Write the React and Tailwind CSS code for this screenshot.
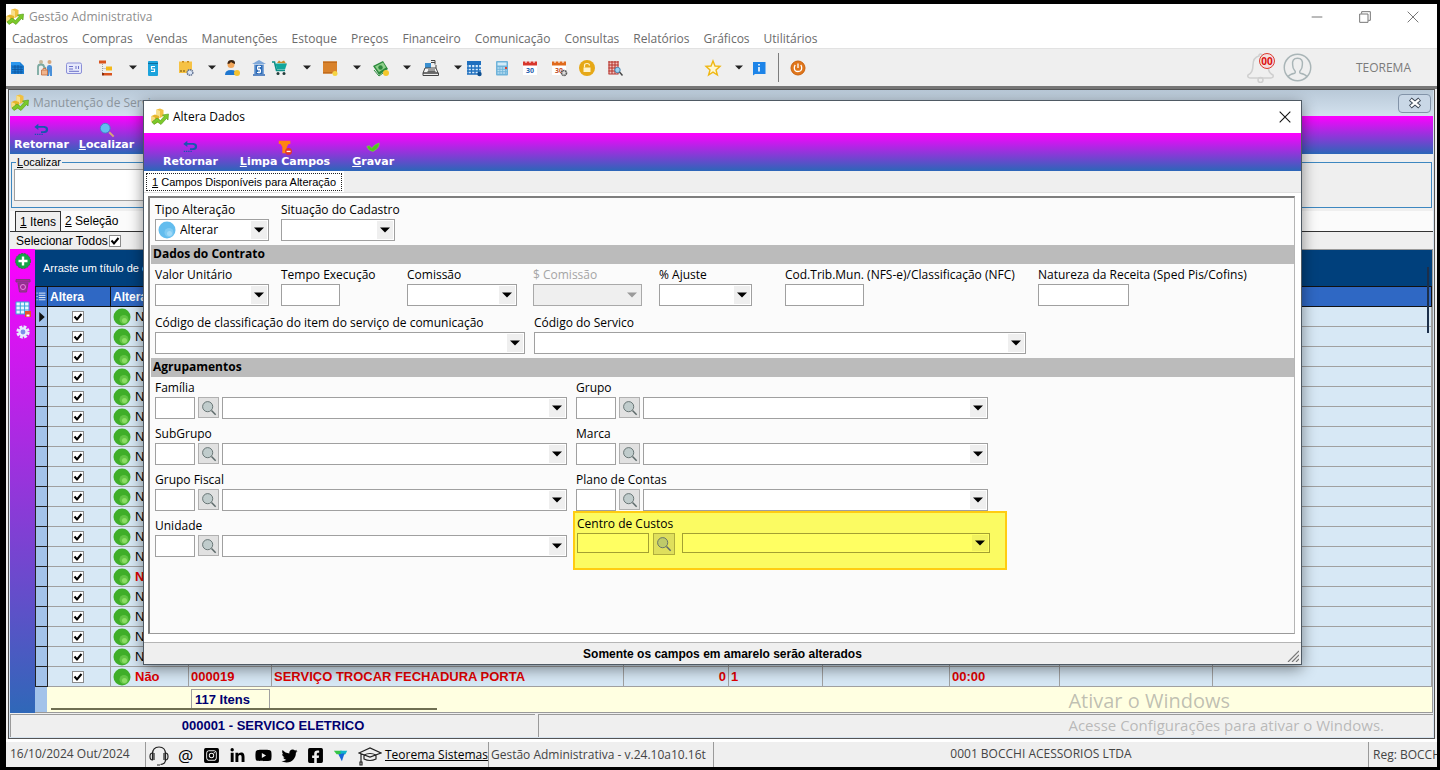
// src/App.jsx
import { useId } from "react";
import {
  FaFacebookSquare,
  FaInstagramSquare,
  FaLinkedinIn,
  FaTwitter,
  FaYoutube,
} from "react-icons/fa";

const menuItems = [
  "Cadastros",
  "Compras",
  "Vendas",
  "Manutenções",
  "Estoque",
  "Preços",
  "Financeiro",
  "Comunicação",
  "Consultas",
  "Relatórios",
  "Gráficos",
  "Utilitários",
];

/* ---------- Icons ---------- */

const Svg = ({ className = "h-[18px] w-[18px]", children }) => (
  <svg viewBox="0 0 18 18" className={`shrink-0 ${className}`} fill="none" aria-hidden="true">
    {children}
  </svg>
);

const Logo = () => (
  <Svg>
    <path d="M5.500 1.500L9 .5l3.500 1.500v6L9 10 5.500 8z" fill="#f0c040" />
    <path d="M5.500 1.500L9 3v6.500L5.500 8z" fill="#f9e08a" />
    <path d="M.5 8L4 6.500 8 8v6l-4 2-3.500-2z" fill="#e6b52a" />
    <path d="M.5 8L4 9.500v6L.5 14z" fill="#f6dc80" />
    <path d="M1 14l5-4 3.500 2.500L13 8.500 11.500 7 17.500 6l-.5 6-1.500-1.500L10 16.500 6.500 14 3 16.500z" fill="#7cc92a" stroke="#4f9a18" strokeWidth=".6" />
  </Svg>
);

const BookIcon = () => (
  <Svg>
    <path d="M3 3h9l4 4v8H3z" fill="#1b7fd6" />
    <path d="M3 3h9v3H3z" fill="#2b97ee" />
    <path d="M4 8h11M4 10.500h11M4 13h11M7 6v9M10 6v9M13 7v8" stroke="#0b5196" strokeWidth=".7" />
  </Svg>
);

const PeopleIcon = () => (
  <Svg>
    <circle cx="5" cy="3" r="2" fill="#c9b89a" />
    <circle cx="13.500" cy="3" r="2" fill="#d8a679" />
    <path d="M2 16V8q0-2.500 3-2.500T8 8l2 1.500" stroke="#7aa9a0" strokeWidth="1.800" />
    <path d="M11 8q0-2 2.500-2T16 8v9h-2v-5l-1 5h-2z" fill="#4a90d9" />
    <path d="M5.500 11h6v5h-6z" fill="#f0b48c" stroke="#c36a3a" strokeWidth=".8" />
    <path d="M7 11V9.500h3V11" stroke="#c36a3a" strokeWidth=".8" />
  </Svg>
);

const CardIcon = () => (
  <Svg>
    <rect x="1.500" y="4" width="15" height="10.500" rx="1.500" fill="#e6e9fb" stroke="#8b8fd8" />
    <path d="M4 7.500h4M4 10h4M4 12.300h10M11 7v3M13.500 7v3" stroke="#6c70c9" />
  </Svg>
);

const TreeIcon = () => (
  <Svg>
    <path d="M5.500 5v10H8M5.500 9.500h4" stroke="#8b8b8b" strokeWidth=".8" strokeDasharray="1 1" />
    <path d="M2 1.500h7v3H2z" fill="#d9531e" />
    <path d="M9 7.500h6v4H9z" fill="#f3b91a" />
    <path d="M7 14h8v2.500H7z" fill="#d9531e" />
    <path d="M5 14h2v2.500H5z" fill="#8c2d0a" />
  </Svg>
);

const PhoneMoneyIcon = () => (
  <Svg>
    <rect x="4" y="2" width="10" height="15" rx="1" fill="#1ca3dc" />
    <path d="M4 4.500h10" stroke="#0d6f9f" />
    <path d="M11 7.500H7.500v2.500h3v2.500H7" stroke="#fff" strokeWidth="1.200" />
  </Svg>
);

const BoxGearIcon = () => (
  <Svg>
    <path d="M2 2.500h13V14H2z" fill="#f6c244" />
    <path d="M5 2h2v1.500H5zM10 2h2v1.500h-2z" fill="#c98a1a" />
    <path d="M3 12h2M6 12h2" stroke="#6b4a07" />
    <circle cx="13" cy="13.500" r="2.800" fill="#dbe6f7" stroke="#5f7090" strokeWidth="1.500" strokeDasharray="1.500 .6" />
  </Svg>
);

const PersonIcon = () => (
  <Svg>
    <path d="M2 16q0-5 6-5t6 5z" fill="#1f77d0" />
    <circle cx="8" cy="5.500" r="3.500" fill="#f2a65a" />
    <path d="M4.500 5q0-4 4-4t3.500 4q-3-1-4-2-1 2-3.500 2z" fill="#3b2413" />
    <circle cx="14" cy="14" r="3" fill="#f6c22f" />
  </Svg>
);

const BankIcon = () => (
  <Svg>
    <path d="M9 1l7 4H2zM4 5.500h10V15H4z" fill="#7fa8d9" />
    <path d="M3 15h12v2H3z" fill="#5b87c2" />
    <rect x="5.500" y="6" width="7" height="9" fill="#2e6cb8" />
    <path d="M11 7.500H7.500v3h3v3H7M9 6.500v8" stroke="#fff" />
  </Svg>
);

const CartIcon = () => (
  <Svg>
    <path d="M6 4l2-2.500 2 1.500 3-1.500 2 3z" fill="#c98a2a" />
    <path d="M1 3h2.500l2 8.500H14" stroke="#0d8f86" strokeWidth="1.600" />
    <path d="M4.500 4.500H16l-2 6H6z" fill="#12a79c" />
    <circle cx="7" cy="14.500" r="1.500" fill="#223b3a" />
    <circle cx="13" cy="14.500" r="1.500" fill="#223b3a" />
  </Svg>
);

const PackageIcon = () => (
  <Svg>
    <path d="M2 2.500h14v12H2z" fill="#d9822b" />
    <path d="M2 2.500h14v1.500H2zM2 14.500h9v-1.500H2z" fill="#c26c1c" />
    <circle cx="14" cy="14.500" r="2.500" fill="#f5d443" />
  </Svg>
);

const MoneyIcon = () => (
  <Svg>
    <path d="M1 7l10-5 5 8-9 6z" fill="#2c8a3c" />
    <path d="M3 7.500l8-4 3 5-7 4.500z" fill="#8fd08c" />
    <circle cx="8.500" cy="8.500" r="2.200" fill="#2c8a3c" />
    <path d="M2 11l5 6 4-3" stroke="#2c8a3c" />
    <circle cx="14" cy="14" r="3" fill="#f4c72c" />
  </Svg>
);

const RegisterIcon = () => (
  <Svg>
    <path d="M3 4h6v5H3z" fill="#3a8fd0" />
    <path d="M9 1.500h4v4M14 6v3M9 3.500h4" stroke="#444" />
    <path d="M3 9h11l2 5H1z" fill="#f5f5f5" stroke="#444" />
    <path d="M1 14h15.500v2.500H1zM6 11h7M5.500 12.700h8" stroke="#444" />
  </Svg>
);

const TableIcon = () => (
  <Svg>
    <path d="M2 3h14v12H2z" fill="#d6eafb" />
    <path d="M2 2h14v4H2z" fill="#1f6fbe" />
    <path d="M2 9h14M2 12h14M2 15h12M3 6v9M6.500 6v9M10 6v9M13.500 6v9" stroke="#1f6fbe" strokeWidth="1.300" />
    <circle cx="14.500" cy="15" r="2.200" fill="#0e4f90" />
  </Svg>
);

const CalculatorIcon = () => (
  <Svg>
    <rect x="3" y="2" width="12" height="14.500" rx="1" fill="#6fb3da" />
    <path d="M4.500 3.500h9v3h-9z" fill="#d3ecf9" />
    <path d="M4.500 9h9M4.500 11.500h9M4.500 14h9" stroke="#b9def1" strokeWidth="1.500" strokeDasharray="2 .8" />
    <path d="M12 8h2v2h-2z" fill="#d9432f" />
  </Svg>
);

const CalendarIcon = ({ head, gear }) => (
  <Svg>
    <path d="M2 3h14v13H2z" fill="#fff" />
    <path d="M2 2.500h14v4H2z" fill={head} />
    <path d="M5 1.500v2.500M9 1.500v2.500M13 1.500v2.500" stroke="#fff" />
    <text x="9" y="13.500" textAnchor="middle" fontSize="7" fontWeight="700" fill={gear ? "#c4512a" : "#1f5fae"}>
      30
    </text>
    {gear && <circle cx="14" cy="14" r="2.500" fill="#ddd" stroke="#555" strokeWidth="1.600" strokeDasharray="1.500 .6" />}
  </Svg>
);

const LockIcon = () => (
  <Svg>
    <circle cx="9" cy="9" r="8" fill="#e6a817" />
    <path d="M5.500 8.500h7V13h-7z" fill="#fff3cc" />
    <path d="M6.500 8.500V6.500q0-2 2.500-2t2.500 2" stroke="#fff3cc" strokeWidth="1.200" />
  </Svg>
);

const GridSearchIcon = () => (
  <Svg>
    <path d="M2.500 2.500h10v12h-10z" fill="#f4c4bf" />
    <path d="M3 2v13M6 2v13M9 2v13M12 2v13M2.500 3h10M2.500 6h10M2.500 9h10M2.500 12h10M2.500 15h10" stroke="#b3312a" />
    <circle cx="11.500" cy="11" r="2.700" fill="#9bd2f2" stroke="#4b84ae" />
    <path d="M13.500 13l3 3.500" stroke="#444" strokeWidth="1.400" />
  </Svg>
);

const StarIcon = () => (
  <Svg>
    <path d="M9 2l2 5 5 .4-4 3.500 1.400 5.100L9 13.200 4.600 16 6 10.900 2 7.400 7 7z" fill="#fff7d0" stroke="#efb713" strokeWidth="1.400" />
  </Svg>
);

const InfoIcon = () => (
  <Svg>
    <path d="M3 3h12.500v12H5l-2 1.500z" fill="#1d84e8" />
    <path d="M9 8v4.500M9 5v1.500" stroke="#fff" strokeWidth="1.600" />
  </Svg>
);

const PowerIcon = () => (
  <Svg>
    <circle cx="9" cy="9" r="7" fill="#e0761b" stroke="#c9610d" />
    <path d="M6.300 6q-1 1-1 3 0 3.500 3.700 3.500t3.700-3.500q0-2-1-3M9 4.500V9" stroke="#fff" strokeWidth="1.300" />
  </Svg>
);

const BackIcon = () => (
  <Svg className="h-4 w-4">
    <path d="M6 2L1.500 5.500 6 9V6.500h6q2.500 0 2.500 2t-2.500 2H9v2h4q4-.5 4-4t-4-4H6z" fill="#1757b0" />
    <path d="M2 14h10" stroke="#1757b0" strokeWidth="1.500" strokeDasharray="1.500 1" />
  </Svg>
);

const FindIcon = () => (
  <Svg className="h-4 w-4">
    <circle cx="7" cy="7" r="5.500" fill="#63bdf0" stroke="#3b86c4" />
    <path d="M11.500 11.500l5 5" stroke="#d9a878" strokeWidth="2.200" />
  </Svg>
);

const CleanIcon = () => (
  <Svg className="h-4 w-4">
    <path d="M2 2h13v3.500h-2L11 9v7H6V9L4 5.500H2z" fill="#ff8412" />
    <circle cx="13" cy="14" r="3.800" fill="#e5352b" />
    <path d="M10.800 14h4.400" stroke="#fff" strokeWidth="1.500" />
  </Svg>
);

const SaveIcon = () => (
  <Svg className="h-4 w-4">
    <path d="M2 8.500l3-1 2.500 3q3-4.500 8.500-6 0 6-7 9.500Q4 13.500 2 8.500z" fill="#4ec41d" stroke="#7be04d" strokeWidth=".6" />
  </Svg>
);

const MagnifierIcon = () => (
  <Svg className="h-4 w-4">
    <circle cx="7.500" cy="7.500" r="5.700" fill="#5f8f8f" fillOpacity=".25" stroke="#5d6a6a" />
    <path d="M11.800 11.800l4.700 4.700" stroke="#5d6a6a" strokeWidth="1.700" />
  </Svg>
);

const DownArrow = ({ className = "text-black" }) => (
  <svg viewBox="0 0 10 6" className={`h-1.5 w-2.5 shrink-0 ${className}`} aria-hidden="true">
    <path d="M0 .5h10L5 5.500z" fill="currentColor" />
  </svg>
);

const MenuArrow = () => (
  <svg viewBox="0 0 10 6" className="h-1.5 w-2.5 shrink-0 text-[#222]" aria-hidden="true">
    <path d="M1 .5h8l-4 4z" fill="currentColor" />
  </svg>
);

const Ball = ({ color, light }) => (
  <Svg>
    <circle cx="9" cy="9" r="8.500" fill={color} />
    <circle cx="11" cy="11.500" r="4.500" fill={light} fillOpacity=".35" />
    <circle cx="11.500" cy="12.500" r="2.500" fill={light} fillOpacity=".6" />
  </Svg>
);

/* ---------- Form controls ---------- */

const Label = ({ id, muted, children }) => (
  <label
    htmlFor={id}
    className={`block h-5 whitespace-nowrap leading-[22px] ${muted ? "text-[#a5a5a5]" : "text-black"}`}
  >
    {children}
  </label>
);

const Combo = ({ id, label, width, height = "h-[22px]", disabled, value = "", icon, highlight }) => (
  <div
    className={`relative flex shrink-0 items-center border ${width} ${height} ${
      highlight
        ? "border-[#a3a032] bg-[#ffff62]"
        : disabled
          ? "border-[#a9a9a9] bg-[#efefef]"
          : "border-[#a0a0a0] bg-white"
    }`}
  >
    {icon && <span className="pl-0.5">{icon}</span>}
    <select
      id={id}
      aria-label={label}
      disabled={disabled}
      defaultValue={value}
      className="h-full min-w-0 flex-1 appearance-none bg-transparent pl-1 outline-none"
    >
      <option value={value}>{value}</option>
    </select>
    <span
      className={`pointer-events-none absolute inset-y-px right-px flex w-4 items-center justify-center ${
        highlight ? "bg-[#f1f15f]" : "bg-[#efefef]"
      }`}
    >
      <DownArrow className={disabled ? "text-[#9a9a9a]" : "text-black"} />
    </span>
  </div>
);

const ComboField = ({ label, cell, ...props }) => {
  const id = useId();
  return (
    <div className={cell}>
      <Label id={id} muted={props.disabled}>
        {label}
      </Label>
      <Combo id={id} {...props} />
    </div>
  );
};

const TextField = ({ label, cell, width }) => {
  const id = useId();
  return (
    <div className={cell}>
      <Label id={id}>{label}</Label>
      <input id={id} type="text" className={`block h-[22px] border border-[#a0a0a0] bg-white ${width}`} />
    </div>
  );
};

const LookupField = ({ label }) => {
  const id = useId();
  return (
    <div>
      <Label id={id}>{label}</Label>
      <div className="flex gap-[3px]">
        <input id={id} type="text" className="h-[22px] w-10 border border-[#a0a0a0] bg-white" />
        <button
          type="button"
          aria-label={`Pesquisar ${label}`}
          className="flex h-[21px] w-[21px] items-center justify-center border border-[#b0b0b0] bg-[#e1e1e1]"
        >
          <MagnifierIcon />
        </button>
        <Combo label={`${label} - descrição`} width="w-[345px]" />
      </div>
    </div>
  );
};

const CostCenterField = () => {
  const id = useId();
  return (
    <div className="h-[59px] w-[434px] border-2 border-[#ffcc11] bg-[#fbfb62] pl-0.5">
      <Label id={id}>Centro de Custos</Label>
      <div className="flex">
        <input id={id} type="text" className="h-5 w-[72px] border border-[#a3a032] bg-[#ffff62]" />
        <button
          type="button"
          aria-label="Pesquisar Centro de Custos"
          className="ml-1 mr-[7px] flex h-[22px] w-[22px] items-center justify-center border border-[#b0ad3c] bg-[#dfdf5c]"
        >
          <MagnifierIcon />
        </button>
        <Combo label="Centro de Custos - descrição" width="w-[308px]" height="h-5" highlight />
      </div>
    </div>
  );
};

const Section = ({ children }) => (
  <h2 className="ml-px mt-1 h-[19px] bg-[#bbbbbb] pl-0.5 font-bold leading-[18px] text-black">
    {children}
  </h2>
);

const ToolButton = ({ icon, hotkey, children }) => (
  <button
    type="button"
    className="flex flex-col items-center font-['DejaVu_Sans',sans-serif] text-[11px] font-bold leading-[14px] text-white"
  >
    {icon}
    <span>
      {hotkey && <u>{hotkey}</u>}
      {children}
    </span>
  </button>
);

const Check = ({ label, id }) => (
  <span className="relative flex h-3 w-3">
    <input
      id={id}
      type="checkbox"
      aria-label={label}
      defaultChecked
      className="peer h-3 w-3 appearance-none border border-[#8a8a8a] bg-white"
    />
    <svg viewBox="0 0 12 12" className="pointer-events-none absolute inset-0 hidden peer-checked:block" aria-hidden="true">
      <path d="M2.500 5.500l2.500 3 4.500-5.500" stroke="#000" strokeWidth="2" fill="none" />
    </svg>
  </span>
);

/* ---------- Main window ---------- */

const mainTools = [
  { name: "Empresas", icon: <BookIcon />, gap: "ml-0" },
  { name: "Clientes", icon: <PeopleIcon />, gap: "ml-2.5" },
  { name: "Cartões", icon: <CardIcon />, gap: "ml-[11px]" },
  { name: "Estrutura", icon: <TreeIcon />, gap: "ml-3.5" },
  { name: "Mais estrutura", icon: <MenuArrow />, gap: "ml-[13px]" },
  { name: "Contas", icon: <PhoneMoneyIcon />, gap: "ml-1.5" },
  { name: "Produtos", icon: <BoxGearIcon />, gap: "ml-[15px]" },
  { name: "Mais produtos", icon: <MenuArrow />, gap: "ml-3" },
  { name: "Vendedor", icon: <PersonIcon />, gap: "ml-1.5" },
  { name: "Banco", icon: <BankIcon />, gap: "ml-[9px]" },
  { name: "Pedidos", icon: <CartIcon />, gap: "ml-[3px]" },
  { name: "Mais pedidos", icon: <MenuArrow />, gap: "ml-[13px]" },
  { name: "Estoque", icon: <PackageIcon />, gap: "ml-[9px]" },
  { name: "Mais estoque", icon: <MenuArrow />, gap: "ml-[13px]" },
  { name: "Caixa", icon: <MoneyIcon />, gap: "ml-2.5" },
  { name: "Mais caixa", icon: <MenuArrow />, gap: "ml-3" },
  { name: "Frente de caixa", icon: <RegisterIcon />, gap: "ml-2.5" },
  { name: "Mais frente de caixa", icon: <MenuArrow />, gap: "ml-[13px]" },
  { name: "Tabela", icon: <TableIcon />, gap: "ml-0.5" },
  { name: "Calculadora", icon: <CalculatorIcon />, gap: "ml-2.5" },
  { name: "Agenda", icon: <CalendarIcon head="#d8362b" />, gap: "ml-2.5" },
  { name: "Configurar agenda", icon: <CalendarIcon head="#e06a1c" gear />, gap: "ml-[11px]" },
  { name: "Bloqueio", icon: <LockIcon />, gap: "ml-2.5" },
  { name: "Consulta", icon: <GridSearchIcon />, gap: "ml-2.5" },
  { name: "Favoritos", icon: <StarIcon />, gap: "ml-20" },
  { name: "Mais favoritos", icon: <MenuArrow />, gap: "ml-3" },
  { name: "Informações", icon: <InfoIcon />, gap: "ml-1.5" },
];

const AppHeader = () => (
  <header className="bg-white text-[#6b6b6b]">
    <div className="flex h-[25px] items-center pr-[18px] text-[#8e8e8e]">
      <Logo />
      <h1 className="ml-[5px]">Gestão Administrativa</h1>
      <div className="ml-auto flex items-center gap-9 text-[#777]">
        <button type="button" aria-label="Minimizar">
          <Svg className="h-3 w-3">
            <path d="M1 9h16" stroke="currentColor" strokeWidth="1.500" />
          </Svg>
        </button>
        <button type="button" aria-label="Restaurar">
          <Svg className="h-3 w-3">
            <path d="M1 4.500h12.500V17H1zM4 4V1h13v13h-3" stroke="currentColor" strokeWidth="1.500" />
          </Svg>
        </button>
        <button type="button" aria-label="Fechar">
          <Svg className="h-3 w-3">
            <path d="M1 1l16 16M17 1L1 17" stroke="currentColor" strokeWidth="1.500" />
          </Svg>
        </button>
      </div>
    </div>
    <nav className="flex h-[19px] items-center gap-3.5 pl-1.5">
      {menuItems.map((item) => (
        <button key={item} type="button">
          {item}
        </button>
      ))}
    </nav>
    <div className="flex h-[38px] items-center border-t border-[#e2e2e2] bg-[#efefef] pl-0.5 pr-[26px]">
      {mainTools.map(({ name, icon, gap }) => (
        <button key={name} type="button" aria-label={name} className={gap}>
          {icon}
        </button>
      ))}
      <span className="ml-2.5 h-[29px] w-px bg-[#7d7d7d]" />
      <button type="button" aria-label="Sair" className="ml-2.5">
        <PowerIcon />
      </button>
      <button type="button" aria-label="Notificações" className="relative ml-auto">
        <svg viewBox="0 0 28 30" className="h-[30px] w-7" fill="none" aria-hidden="true">
          <path d="M12 3q0-2 1.500-2T15 3q6 1.500 6 9 0 8 5 10 1 3-3 3H4q-4 0-3-3 5-2 5-10 0-7.500 6-9z" stroke="#cfcfcf" strokeWidth="1.500" />
          <circle cx="13.500" cy="27" r="2.500" stroke="#cfcfcf" strokeWidth="1.500" />
        </svg>
        <span className="absolute right-0 top-0 flex h-4 w-4 items-center justify-center rounded-full border border-[#dd3b30] bg-[#f3dede] text-[10px] font-bold text-[#dd1111]">
          00
        </span>
      </button>
      <button type="button" aria-label="Usuário" className="ml-2">
        <svg viewBox="0 0 30 30" className="h-[29px] w-[29px]" fill="none" stroke="#a9b5b7" strokeWidth="1.500" aria-hidden="true">
          <circle cx="15" cy="15" r="13.700" />
          <path d="M5 24.500q2-2.500 7-3.500 1.500-1 0-3-2-2-2-5.500Q9 5.500 15 5.500t5 7q0 3.500-2 5.500-1.500 2 0 3 5 1 7 3.500" />
        </svg>
      </button>
      <span className="ml-11 text-[#7b7b7b]">TEOREMA</span>
    </div>
  </header>
);

const rows = Array.from({ length: 19 }, (_, i) => ({ id: i + 1, alert: i === 13 || i === 18 }));

const ItemsTable = () => (
  <table className="w-full table-fixed border-collapse text-[13px]">
    <colgroup>
      <col className="w-3" />
      <col className="w-[63px]" />
      <col className="w-[78px]" />
      <col className="w-[83px]" />
      <col className="w-[352px]" />
      <col className="w-[105px]" />
      <col className="w-[94px]" />
      <col className="w-[127px]" />
      <col className="w-[110px]" />
      <col className="w-[153px]" />
      <col />
    </colgroup>
    <thead>
      <tr className="h-5 bg-[#2f68c4] text-left text-[12px] leading-[18px] text-white">
        <th className="border border-[#111] p-0">
          <Svg className="h-2.5 w-2.5">
            <path d="M5 2h12M5 6h12M5 10h12M5 14h12M1 2h2M1 8h2M1 14h2" stroke="#fff" strokeWidth="1.500" />
          </Svg>
        </th>
        <th className="border border-[#111] p-0 pl-0.5">Altera</th>
        <th className="overflow-hidden border border-[#111] p-0 pl-0.5">Alteração</th>
        <th colSpan={8} className="border border-[#111] p-0" />
      </tr>
    </thead>
    <tbody>
      {rows.map(({ id, alert }) => (
        <tr
          key={id}
          className={`h-5 bg-[#d7e8f5] leading-4 ${alert ? "font-bold text-[#e00000]" : "text-black"}`}
        >
          <td className="border border-[#222] bg-[#a3c3ea] p-0">
            {id === 1 && (
              <Svg className="mx-auto h-2.5 w-2.5">
                <path d="M4 0l10 9-10 9z" fill="#111" />
              </Svg>
            )}
          </td>
          <td className="border border-[#a0a0a0] p-0 pr-0.5">
            <div className="flex justify-center">
              <Check label={`Altera item ${id}`} />
            </div>
          </td>
          <td className="border border-[#a0a0a0] p-0 pl-0.5">
            <div className="flex items-center gap-1">
              <Ball color="#3fae29" light="#a6ee7a" />
              Não
            </div>
          </td>
          <td className="border border-[#a0a0a0] p-0 pl-0.5">{id === 19 && "000019"}</td>
          <td className="border border-[#a0a0a0] p-0 pl-0.5">
            {id === 19 && "SERVIÇO TROCAR FECHADURA PORTA"}
          </td>
          <td className="border border-[#a0a0a0] p-0 pr-0.5 text-right">{id === 19 && "0"}</td>
          <td className="border border-[#a0a0a0] p-0 pl-0.5">{id === 19 && "1"}</td>
          <td className="border border-[#a0a0a0] p-0" />
          <td className="border border-[#a0a0a0] p-0 pl-0.5">{id === 19 && "00:00"}</td>
          <td className="border border-[#a0a0a0] p-0" />
          <td className="border border-[#a0a0a0] p-0" />
        </tr>
      ))}
    </tbody>
  </table>
);

const SideTools = () => (
  <div className="flex w-[25px] shrink-0 flex-col items-center gap-1.5 bg-linear-to-b/srgb from-[#ff00ff] to-[#2f68b8] pt-[3px]">
    <button type="button" aria-label="Adicionar">
      <Svg>
        <circle cx="9" cy="9" r="7.500" fill="#17a349" stroke="#2c7a3f" strokeDasharray="2 1" />
        <path d="M9 4.500v9M4.500 9h9" stroke="#fff" strokeWidth="2.400" />
      </Svg>
    </button>
    <button type="button" aria-label="Excluir">
      <Svg>
        <path d="M2 3.500h14v2.500H2zM4 7h10l-1.500 9h-7z" fill="#a52a9b" stroke="#7d3d7c" />
        <circle cx="9" cy="11" r="2.500" stroke="#e38be0" />
      </Svg>
    </button>
    <button type="button" aria-label="Salvar grade">
      <Svg>
        <path d="M2 2h13v12H2z" fill="#e8f7ff" />
        <path d="M2 6h13M2 10h13M6.300 2v12M10.600 2v12M2 2h13v12H2z" stroke="#39a5dc" />
        <path d="M11 11h6v6h-6z" fill="#e5532b" />
        <path d="M12.500 14.500h3v2h-3z" fill="#fff" />
      </Svg>
    </button>
    <button type="button" aria-label="Configurações">
      <Svg className="h-4 w-4">
        <circle cx="9" cy="9" r="6" stroke="#e6ecff" strokeWidth="3" strokeDasharray="3.200 1.500" />
        <circle cx="9" cy="9" r="4" fill="#7d8de8" stroke="#e6ecff" strokeWidth="2.500" />
      </Svg>
    </button>
  </div>
);

const ServiceWindow = () => (
  <section className="flex min-h-0 flex-1 flex-col border border-[#555] bg-[#d6e3ef] px-px pb-px">
    <div className="flex h-[26px] shrink-0 items-center bg-linear-to-b from-[#b9c9d8] to-[#d3e1ee] pl-px text-[#8b949c]">
      <Logo />
      <h2 className="ml-1">Manutenção de Serviços</h2>
      <button
        type="button"
        aria-label="Fechar janela"
        className="ml-auto mr-0.5 flex h-[19px] w-[33px] items-center justify-center rounded-sm border border-[#8293a8] bg-[#c9d7e6]"
      >
        <Svg className="h-3.5 w-3.5">
          <path d="M3 4l12 10M15 4L3 14" stroke="#3c4654" strokeWidth="5.500" />
          <path d="M3.700 4.600l10.600 8.800M14.300 4.600L3.700 13.400" stroke="#fff" strokeWidth="3" />
        </Svg>
      </button>
    </div>
    <div className="flex h-[38px] shrink-0 items-start gap-2.5 bg-linear-to-b/srgb from-[#ff00ff] to-[#2b67b8] pl-1 pt-1.5">
      <ToolButton icon={<BackIcon />}>Retornar</ToolButton>
      <ToolButton icon={<FindIcon />} hotkey="L">
        ocalizar
      </ToolButton>
    </div>

    <div className="flex min-h-0 flex-1 flex-col bg-[#efefef] font-['Liberation_Sans',sans-serif] text-black">
      <fieldset className="mx-px mt-px h-[53px] border border-[#3d87c0] px-0.5 pb-1.5">
        <legend className="ml-0.5 px-px text-[11px] leading-[14px]">
          <label htmlFor="localizar">
            <u>L</u>ocalizar
          </label>
        </legend>
        <input id="localizar" type="text" className="block h-8 w-[660px] border border-[#a0a0a0] bg-white" />
      </fieldset>
      <div role="tablist" className="mt-[3px] flex h-[21px] shrink-0 items-end border-b border-[#333] bg-[#fbfbfb] pl-[5px]">
        <button type="button" role="tab" aria-selected="true" className="h-full border-x border-t border-[#333] bg-[#efefef] px-1">
          <u>1</u> Itens
        </button>
        <button type="button" role="tab" aria-selected="false" className="h-full px-1">
          <u>2</u> Seleção
        </button>
      </div>
      <div className="flex h-[17px] shrink-0 items-center gap-px pl-1.5">
        <label htmlFor="todos">Selecionar Todos</label>
        <Check id="todos" label="Selecionar Todos" />
      </div>

      <div className="flex min-h-0 flex-1">
        <SideTools />
        <div className="relative flex min-w-0 flex-1 flex-col overflow-hidden border-y border-r border-[#9a9a9a]">
          <div className="flex h-9 shrink-0 items-center bg-[#00407c] pl-2 text-[11px] text-white">
            Arraste um título de coluna aqui para agrupar
          </div>
          <ItemsTable />
          <div className="flex min-h-0 flex-1 bg-[#ffffe1]">
            <span className="w-3 bg-[#a3c3ea]" />
            <div className="flex flex-1 items-start pt-0.5">
              <span className="ml-36 h-5 w-[79px] border border-[#a0a0a0] pl-[3px] text-[13px] font-bold leading-[19px] text-[#000070]">
                117 Itens
              </span>
            </div>
          </div>
          <span className="absolute bottom-0.5 left-4 h-0.5 w-[386px] bg-[#6f6f52]" />
          <span className="absolute right-[3px] top-[17px] h-[66px] w-0.5 bg-[#1c2f4a]" />
        </div>
      </div>

      <footer className="flex h-6 shrink-0 gap-[3px] pt-px text-[13px] font-bold text-[#000070]">
        <div className="flex w-[525px] items-center justify-center border-l border-t border-[#9a9a9a]">
          000001 - SERVICO ELETRICO
        </div>
        <div className="flex-1 border-l border-t border-[#9a9a9a]" />
      </footer>
    </div>
  </section>
);

/* ---------- Dialog ---------- */

const EditDialog = () => (
  <div
    role="dialog"
    aria-labelledby="dialog-title"
    className="absolute bottom-[105px] left-[143px] right-[138px] top-[100px] flex flex-col border border-[#4f5a64] bg-white shadow-[0_4px_14px_rgba(0,0,0,0.45)]"
  >
    <div className="flex h-8 shrink-0 items-center pl-[7px] pr-2.5 text-black">
      <Logo />
      <h2 id="dialog-title" className="ml-1">
        Altera Dados
      </h2>
      <button type="button" aria-label="Fechar" className="ml-auto">
        <Svg className="h-3 w-3">
          <path d="M1 1l16 16M17 1L1 17" stroke="#111" strokeWidth="1.600" />
        </Svg>
      </button>
    </div>
    <div className="flex h-[38px] shrink-0 items-start gap-[22px] bg-linear-to-b/srgb from-[#ff00ff] to-[#2b67b8] pl-[19px] pt-1.5">
      <ToolButton icon={<BackIcon />}>Retornar</ToolButton>
      <ToolButton icon={<CleanIcon />} hotkey="L">
        impa Campos
      </ToolButton>
      <ToolButton icon={<SaveIcon />} hotkey="G">
        ravar
      </ToolButton>
    </div>

    <div role="tablist" className="flex h-[22px] shrink-0 border-b border-[#e0e0e0] bg-[#efefef]">
      <div className="bg-white px-0.5 pt-0.5">
        <button
          type="button"
          role="tab"
          aria-selected="true"
          className="h-[18px] border border-dotted border-[#222] px-[5px] font-['Liberation_Sans',sans-serif] text-[11px] leading-4 text-black"
        >
          <u>1</u> Campos Disponíveis para Alteração
        </button>
      </div>
    </div>

    <div className="ml-1 mr-1.5 mt-[3px] flex-1 border border-l-2 border-t-2 border-[#7e7e7e] border-b-[#9a9a9a] border-r-[#b5b5b5] bg-[#fbfbfb] pt-px">
      <div className="flex pl-[5px]">
        <ComboField
          label="Tipo Alteração"
          cell="w-[126px]"
          width="w-[114px]"
          value="Alterar"
          icon={<Ball color="#63bdee" light="#b5e4fb" />}
        />
        <ComboField label="Situação do Cadastro" cell="w-[126px]" width="w-[114px]" />
      </div>
      <Section>Dados do Contrato</Section>
      <div className="flex pl-[5px]">
        <ComboField label="Valor Unitário" cell="w-[126px]" width="w-[114px]" />
        <TextField label="Tempo Execução" cell="w-[126px]" width="w-[59px]" />
        <ComboField label="Comissão" cell="w-[126px]" width="w-[110px]" />
        <ComboField label="$ Comissão" cell="w-[126px]" width="w-[109px]" disabled />
        <ComboField label="% Ajuste" cell="w-[126px]" width="w-[93px]" />
        <TextField
          label="Cod.Trib.Mun. (NFS-e)/Classificação (NFC)"
          cell="w-[253px]"
          width="w-[79px]"
        />
        <TextField label="Natureza da Receita (Sped Pis/Cofins)" cell="w-[220px]" width="w-[91px]" />
      </div>
      <div className="mt-1.5 flex pl-[5px]">
        <ComboField
          label="Código de classificação do item do serviço de comunicação"
          cell="w-[379px]"
          width="w-[370px]"
        />
        <ComboField label="Código do Servico" cell="w-[492px]" width="w-[492px]" />
      </div>
      <Section>Agrupamentos</Section>
      <div className="flex pl-[5px]">
        <div className="flex w-[418px] flex-col gap-1">
          <LookupField label="Família" />
          <LookupField label="SubGrupo" />
          <LookupField label="Grupo Fiscal" />
          <LookupField label="Unidade" />
        </div>
        <div>
          <div className="flex flex-col gap-1 pl-[3px]">
            <LookupField label="Grupo" />
            <LookupField label="Marca" />
            <LookupField label="Plano de Contas" />
          </div>
          <CostCenterField />
        </div>
      </div>
    </div>

    <div className="relative mt-2 flex h-[22px] shrink-0 items-center justify-center border-t border-[#b5b5b5] bg-[#efefef] font-['Liberation_Sans',sans-serif] text-[12px] font-bold text-black">
      Somente os campos em amarelo serão alterados
      <svg viewBox="0 0 12 12" className="absolute bottom-0.5 right-0.5 h-3 w-3" aria-hidden="true">
        <path d="M1 12L12 1M5 12l7-7M9 12l3-3" stroke="#777" strokeWidth="1.200" />
      </svg>
    </div>
  </div>
);

/* ---------- Status bar ---------- */

const socialLinks = [
  { name: "Instagram", icon: <FaInstagramSquare className="h-[17px] w-[17px]" /> },
  { name: "LinkedIn", icon: <FaLinkedinIn className="h-4 w-[17px]" /> },
  { name: "YouTube", icon: <FaYoutube className="h-[17px] w-[17px]" /> },
  { name: "Twitter", icon: <FaTwitter className="h-4 w-[17px]" /> },
  { name: "Facebook", icon: <FaFacebookSquare className="h-[17px] w-[17px]" /> },
];

const StatusBar = () => (
  <footer className="flex h-7 shrink-0 items-center overflow-hidden whitespace-nowrap border-t-[3px] border-white bg-[#efefef] text-[#444]">
    <span className="w-[140px] self-stretch border-r border-[#9a9a9a] pl-1 leading-6">16/10/2024 Out/2024</span>
    <div className="flex w-[239px] items-center gap-[9px] pl-[3px] pt-0.5 text-black">
      <a href="#suporte" aria-label="Suporte">
        <svg viewBox="0 0 20 20" className="h-5 w-5" fill="none" stroke="#222" strokeWidth="1.200" aria-hidden="true">
          <path d="M3.500 8q0-7 6.500-7t6.500 7M16.500 14q0 4-5 4.500M8 19h3" />
          <path d="M3.500 7v7q-2.500 0-2.500-3.500T3.500 7zM5 7v7M16.500 7v7q2.500 0 2.500-3.500T16.500 7zM15 7v7" />
        </svg>
      </a>
      <a href="#email" aria-label="E-mail" className="w-4 text-[17px] leading-5">
        @
      </a>
      {socialLinks.map(({ name, icon }) => (
        <a key={name} href={`#${name.toLowerCase()}`} aria-label={name}>
          {icon}
        </a>
      ))}
      <a href="#teorema" aria-label="Teorema">
        <Svg className="h-4 w-4">
          <path d="M1 3h9l-1 4H4z" fill="#35c447" />
          <path d="M8 3h8l-2 4-5 1z" fill="#12b5c9" />
          <path d="M6 7l7-1-3 9z" fill="#1667d8" />
        </Svg>
      </a>
      <a href="#treinamento" aria-label="Treinamento">
        <svg viewBox="0 0 24 20" className="h-5 w-6" fill="none" stroke="#222" strokeWidth="1.200" aria-hidden="true">
          <path d="M1 7l11-5 11 5-11 4zM6 9v4q6 3 12 0V9M6 9q6-3 12 0M3 8v8M2 16h2v3H2z" />
        </svg>
      </a>
    </div>
    <a href="#sistemas" className="pt-px text-black underline">
      Teorema Sistemas
    </a>
    <span className="w-[226px] self-stretch border-x border-[#9a9a9a] pl-0.5 leading-[26px]">
      Gestão Administrativa - v.24.10a10.16t
    </span>
    <span className="flex-1 self-stretch text-center leading-6">0001 BOCCHI ACESSORIOS LTDA</span>
    <span className="w-[69px] self-stretch overflow-hidden border-l border-[#9a9a9a] pl-1 leading-[26px]">
      Reg: BOCCHI
    </span>
  </footer>
);

const App = () => (
  <div className="relative flex h-screen flex-col overflow-hidden bg-black pb-[3px] pl-1.5 pr-[3px] pt-1 font-['Open_Sans',sans-serif] text-[12px] leading-4">
    <AppHeader />
    <main className="flex min-h-0 flex-1 flex-col border-t-[3px] border-[#777] bg-[#efefef] pl-0.5 pr-0.5">
      <ServiceWindow />
    </main>
    <StatusBar />

    <EditDialog />

    {/* Windows activation notice */}
    <div className="pointer-events-none absolute bottom-[35px] right-14 text-[#8a8a8a]/55">
      <p className="text-[20px] leading-7">Ativar o Windows</p>
      <p className="text-[15px] leading-5">Acesse Configurações para ativar o Windows.</p>
    </div>
  </div>
);

export default App;
